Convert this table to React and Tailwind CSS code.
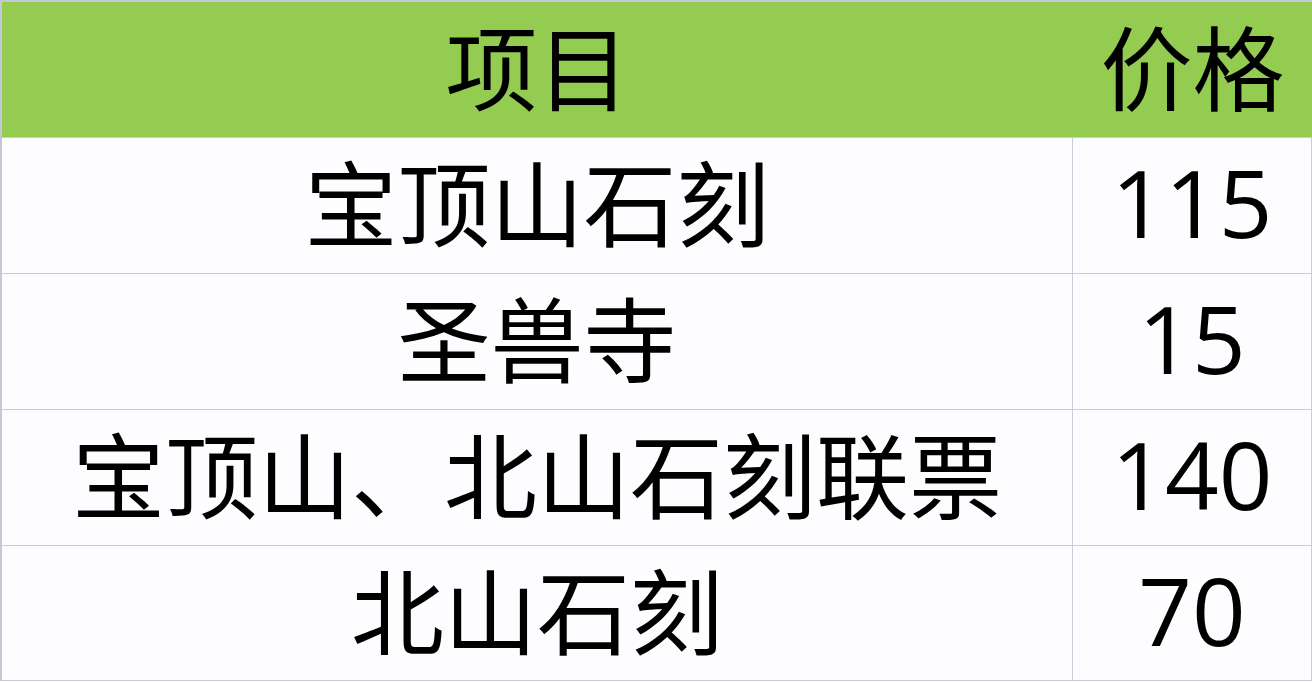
const rows = [
  ["宝顶山石刻", "115"],
  ["圣兽寺", "15"],
  ["宝顶山、北山石刻联票", "140"],
  ["北山石刻", "70"],
];

const cjk = { fontFamily: '"Noto Sans CJK SC", "Noto Sans", sans-serif' };
const num = { fontFamily: '"Open Sans", "Noto Sans", sans-serif' };

export default function App() {
  return (
    <div className="w-[1312px] h-[682px] bg-[#fdfcfe] overflow-hidden" style={cjk}>
      <div className="border-t-2 border-l-2 border-[#c3c8d6] grid grid-cols-[1071px_1fr] text-black">
        <div className="h-[135px] bg-[#94cc52] flex items-center justify-center pb-[12px] text-[92px] leading-[1.3]">
          项目
        </div>
        <div className="h-[135px] bg-[#94cc52] flex items-center justify-center pb-[12px] text-[92px] leading-[1.3]">
          价格
        </div>
        {rows.map(([name, price], i) => (
          <div key={name} className="contents">
            <div
              className={`h-[136px] border-t border-r border-[#c8cddb] flex items-center justify-center pb-[10px] text-[93px] leading-[1.3] ${
                i === rows.length - 1 ? "border-b" : ""
              }`}
            >
              {name}
            </div>
            <div
              className={`h-[136px] border-t border-r border-[#c8cddb] flex items-center justify-center pb-[6px] text-[94px] leading-[1.3] ${
                i === rows.length - 1 ? "border-b" : ""
              }`}
              style={num}
            >
              {price}
            </div>
          </div>
        ))}
      </div>
    </div>
  );
}
